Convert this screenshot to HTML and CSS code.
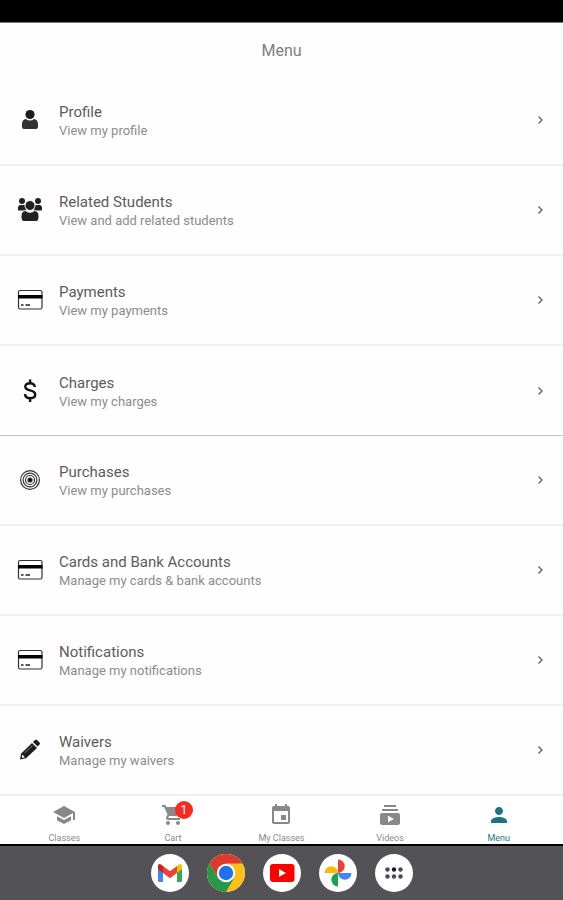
FILE: index.html
```html
<!DOCTYPE html>
<html lang="en">
<head>
  <meta charset="UTF-8" />
  <meta name="viewport" content="width=device-width, initial-scale=1.0" />
  <title>Menu</title>
  <link rel="stylesheet" href="styles.css">
</head>
<body>
  <!-- Shared icons -->
  <svg class="sprite" aria-hidden="true">
    <symbol id="icon-card" viewBox="0 0 26 26">
      <rect x="1.5" y="3.5" width="23.5" height="18.5" rx="1.5" fill="none" stroke="#333" stroke-width="1.2" />
      <path d="M1 8h24.5v3.5H1z" fill="#000" />
      <path d="M4 18h2.5M8.5 18h4.5" stroke="#222" stroke-width="1.5" />
    </symbol>
    <symbol id="icon-chevron" viewBox="0 0 10 10">
      <path d="M3.5 1.5L7 5L3.5 8.5" fill="none" stroke="#666" stroke-width="1.4" />
    </symbol>
  </svg>

  <div class="status-bar"></div>

  <header class="header">
    <h1>Menu</h1>
  </header>

  <main class="menu">
    <a class="menu-item" href="#profile">
      <svg class="menu-icon" viewBox="0 0 26 26">
        <path d="M5 20v-3c0-3 1.5-4.5 4-5a6 6 0 0 0 8 0c2.5 .5 4 2 4 5v3q0 2-2 2H7q-2 0-2-2z" fill="#333" />
        <circle cx="13" cy="7.5" r="4.6" fill="#1c1c1c" />
      </svg>
      <span class="menu-text">
        <span class="menu-title">Profile</span>
        <span class="menu-subtitle">View my profile</span>
      </span>
      <svg class="chevron"><use href="#icon-chevron" /></svg>
    </a>
    <a class="menu-item" href="#students">
      <svg class="menu-icon" viewBox="0 0 26 26" fill="#222">
        <circle cx="5" cy="4" r="3" />
        <circle cx="21" cy="4" r="3" />
        <path d="M1 13V11c0-2 1-3 2.5-3h3.5c1 0 1.5 .5 1.5 1.5 0 2 .5 3 1 4H3q-2 0-2-.5z" />
        <path d="M25 13V11c0-2-1-3-2.5-3h-3.5c-1 0-1.5 .5-1.5 1.5 0 2-.5 3-1 4H23q2 0 2-.5z" />
        <circle cx="13" cy="8.5" r="5" stroke="#fff" />
        <path d="M4 21v-2c0-3.5 1.5-5 4.5-5.5a6.5 6.5 0 0 0 9 0c3 .5 4.5 2 4.5 5.5v2q0 3.5-3 3.5H7q-3 0-3-3.5z" stroke="#fff" />
      </svg>
      <span class="menu-text">
        <span class="menu-title">Related Students</span>
        <span class="menu-subtitle">View and add related students</span>
      </span>
      <svg class="chevron"><use href="#icon-chevron" /></svg>
    </a>
    <a class="menu-item" href="#payments">
      <svg class="menu-icon"><use href="#icon-card" /></svg>
      <span class="menu-text">
        <span class="menu-title">Payments</span>
        <span class="menu-subtitle">View my payments</span>
      </span>
      <svg class="chevron"><use href="#icon-chevron" /></svg>
    </a>
    <a class="menu-item menu-item-dark" href="#charges">
      <svg class="menu-icon" viewBox="0 0 26 26">
        <path d="M18 9c-.5-2.5-2.3-3.8-4.9-3.8-2.8 0-4.8 1.3-4.8 3.5 0 2.5 2.2 3 4.9 3.7 3 .8 5 1.6 5 4.1 0 2.3-2 3.7-4.9 3.7-3 0-5-1.4-5.4-4.2M13.1 1.5v4M13.1 20v4" fill="none" stroke="#111" stroke-width="2.4" />
      </svg>
      <span class="menu-text">
        <span class="menu-title">Charges</span>
        <span class="menu-subtitle">View my charges</span>
      </span>
      <svg class="chevron"><use href="#icon-chevron" /></svg>
    </a>
    <a class="menu-item" href="#purchases">
      <svg class="menu-icon" viewBox="0 0 26 26" fill="none" stroke="#333" stroke-width="1.2">
        <circle cx="13" cy="13" r="9.4" />
        <circle cx="13" cy="13" r="6.9" />
        <circle cx="13" cy="13" r="4.5" />
        <circle cx="13" cy="13" r="2" fill="#000" />
      </svg>
      <span class="menu-text">
        <span class="menu-title">Purchases</span>
        <span class="menu-subtitle">View my purchases</span>
      </span>
      <svg class="chevron"><use href="#icon-chevron" /></svg>
    </a>
    <a class="menu-item" href="#cards">
      <svg class="menu-icon"><use href="#icon-card" /></svg>
      <span class="menu-text">
        <span class="menu-title">Cards and Bank Accounts</span>
        <span class="menu-subtitle">Manage my cards &amp; bank accounts</span>
      </span>
      <svg class="chevron"><use href="#icon-chevron" /></svg>
    </a>
    <a class="menu-item" href="#notifications">
      <svg class="menu-icon"><use href="#icon-card" /></svg>
      <span class="menu-text">
        <span class="menu-title">Notifications</span>
        <span class="menu-subtitle">Manage my notifications</span>
      </span>
      <svg class="chevron"><use href="#icon-chevron" /></svg>
    </a>
    <a class="menu-item" href="#waivers">
      <svg class="menu-icon" viewBox="0 0 26 26">
        <path d="M3 22.5l1.2-6L15 6l5 5L9 21.3z" fill="#1c1c1c" />
        <path d="M16 5l2-2q1-1 2 0l2.5 2.5q1 1 0 2l-2 2z" fill="#1c1c1c" />
        <path d="M5.2 17.5l2.7 2.8-3 .7z" fill="#fff" />
        <path d="M7.5 16l8-7.5" stroke="#999" stroke-width=".8" />
      </svg>
      <span class="menu-text">
        <span class="menu-title">Waivers</span>
        <span class="menu-subtitle">Manage my waivers</span>
      </span>
      <svg class="chevron"><use href="#icon-chevron" /></svg>
    </a>
  </main>

  <nav class="tabs">
    <a class="tab" href="#classes">
      <svg class="tab-icon" viewBox="0 0 24 24"><path d="M5 13.18v4L12 21l7-3.82v-4L12 17l-7-3.82zM12 3L1 9l11 6 9-4.91V17h2V9L12 3z" /></svg>
      <span>Classes</span>
    </a>
    <a class="tab" href="#cart">
      <span class="cart">
        <svg class="tab-icon" viewBox="0 0 24 24"><path d="M7 18c-1.1 0-1.99.9-1.99 2S5.9 22 7 22s2-.9 2-2-.9-2-2-2zM1 2v2h2l3.6 7.59-1.35 2.45c-.16.28-.25.61-.25.96 0 1.1.9 2 2 2h12v-2H7.42c-.14 0-.25-.11-.25-.25l.03-.12.9-1.63h7.45c.75 0 1.41-.41 1.75-1.03l3.58-6.49A1 1 0 0 0 20 4H5.21l-.94-2H1zm16 16c-1.1 0-1.99.9-1.99 2s.89 2 1.99 2 2-.9 2-2-.9-2-2-2z" /></svg>
        <span class="badge">1</span>
      </span>
      <span>Cart</span>
    </a>
    <a class="tab" href="#my-classes">
      <svg class="tab-icon" viewBox="0 0 24 24"><path d="M17 12h-5v5h5v-5zM16 1v2H8V1H6v2H5c-1.11 0-1.99.9-1.99 2L3 19c0 1.1.89 2 2 2h14c1.1 0 2-.9 2-2V5c0-1.1-.9-2-2-2h-1V1h-2zm3 18H5V8h14v11z" /></svg>
      <span>My Classes</span>
    </a>
    <a class="tab" href="#videos">
      <svg class="tab-icon" viewBox="0 0 24 24"><path d="M20 8H4V6h16v2zm-2-6H6v2h12V2zm4 10v8c0 1.1-.9 2-2 2H4c-1.1 0-2-.9-2-2v-8c0-1.1.9-2 2-2h16c1.1 0 2 .9 2 2zm-6 4l-6-3.27v6.53L16 16z" /></svg>
      <span>Videos</span>
    </a>
    <a class="tab tab-active" href="#menu">
      <svg class="tab-icon" viewBox="0 0 24 24"><path d="M12 12c2.21 0 4-1.79 4-4s-1.79-4-4-4-4 1.79-4 4 1.79 4 4 4zm0 2c-2.67 0-8 1.34-8 4v2h16v-2c0-2.66-5.33-4-8-4z" /></svg>
      <span>Menu</span>
    </a>
  </nav>

  <!-- System dock -->
  <footer class="dock">
    <button class="app" aria-label="Gmail">
      <svg viewBox="0 0 38 38">
        <path d="M7 13.5L12 17v11H8.5Q7 28 7 26.5z" fill="#4285f4" />
        <path d="M31 13.5L26 17v11h3.5q1.5 0 1.5-1.5z" fill="#34a853" />
        <path d="M26 12l2-1.5q3-1.5 3 2v2.5L26 19z" fill="#fbbc04" />
        <path d="M12 12l-2-1.5q-3-1.5-3 2v2.5L12 19z" fill="#c5221f" />
        <path d="M12 12l7 5.3 7-5.3v7l-7 5.2-7-5.2z" fill="#ea4335" />
      </svg>
    </button>
    <button class="app" aria-label="Chrome">
      <svg viewBox="0 0 38 38">
        <circle cx="19" cy="19" r="19" fill="#fbc116" />
        <path d="M19 9.5H35.45A19 19 0 0 0 2.55 9.5L10.77 23.75 19 19z" fill="#db3a2d" />
        <path d="M2.55 9.5A19 19 0 0 0 19 38L27.23 23.75 19 19 10.77 23.75z" fill="#279847" />
        <circle cx="19" cy="19" r="9.2" fill="#fff" />
        <circle cx="19" cy="19" r="7.2" fill="#1a73e8" />
      </svg>
    </button>
    <button class="app" aria-label="YouTube">
      <svg viewBox="0 0 38 38">
        <rect x="7" y="10" width="24.5" height="18" rx="3" fill="#f00" />
        <path d="M16 15v8l7-4z" fill="#fff" />
      </svg>
    </button>
    <button class="app" aria-label="Photos">
      <svg viewBox="0 0 38 38">
        <path d="M19 5.5a6.7 6.7 0 0 1 0 13.4z" fill="#ea4335" />
        <path d="M32.5 19a6.7 6.7 0 0 1-13.4 0z" fill="#4285f4" />
        <path d="M19 32.5a6.7 6.7 0 0 1 0-13.4z" fill="#18a34a" />
        <path d="M5.5 19a6.7 6.7 0 0 1 13.4 0z" fill="#fbb904" />
      </svg>
    </button>
    <button class="app" aria-label="All apps">
      <svg viewBox="0 0 38 38" fill="#4a485c">
        <circle cx="12.5" cy="15.5" r="2.2" />
        <circle cx="19" cy="15.5" r="2.2" fill="#1b1836" />
        <circle cx="25.5" cy="15.5" r="2.2" />
        <circle cx="12.5" cy="22.5" r="2.2" />
        <circle cx="19" cy="22.5" r="2.2" />
        <circle cx="25.5" cy="22.5" r="2.2" />
      </svg>
    </button>
  </footer>
</body>
</html>
```
FILE: styles.css
```css
* {
  box-sizing: border-box;
}
body {
  margin: 0;
  min-height: 100vh;
  display: flex;
  flex-direction: column;
  font-family: Roboto, sans-serif;
  background-color: #fefefe;
}
.sprite {
  display: none;
}
.status-bar {
  height: 23px;
  background-color: #000;
  border-bottom: 1px solid #777;
}
.header {
  height: 53px;
  padding-top: 2px;
  display: flex;
  align-items: center;
  justify-content: center;
}
h1 {
  margin: 0;
  font-size: 16px;
  font-weight: 400;
  color: #808080;
}
.menu {
  flex: 1;
}
.menu-item {
  display: flex;
  align-items: center;
  height: 90px;
  padding: 0 18px 0 17px;
  border-bottom: 2px solid #f0f0f0;
  text-decoration: none;
}
.menu-item-dark {
  border-bottom: 1px solid #c4c4c4;
}
.menu-icon {
  width: 26px;
  height: 26px;
}
.menu-text {
  flex: 1;
  display: flex;
  flex-direction: column;
  margin-left: 16px;
  padding-top: 2px;
}
.menu-title {
  font-size: 15px;
  line-height: 20px;
  color: #5c5c5c;
}
.menu-subtitle {
  font-size: 13px;
  line-height: 18px;
  color: #8c8c8c;
}
.chevron {
  width: 10px;
  height: 10px;
}
.tabs {
  display: flex;
  height: 48px;
  padding: 0 10px;
  background-color: #fff;
}
.tab {
  flex: 1;
  display: flex;
  flex-direction: column;
  align-items: center;
  padding-top: 7px;
  font-size: 9px;
  line-height: 12px;
  color: #888;
  text-decoration: none;
}
.tab-icon {
  display: block;
  width: 24px;
  height: 24px;
  margin-bottom: 5px;
  fill: currentColor;
}
.tab-active {
  color: #1c7485;
}
.cart {
  position: relative;
}
.badge {
  position: absolute;
  top: -2px;
  left: 14px;
  width: 18px;
  height: 18px;
  border-radius: 50%;
  background-color: #f92a20;
  color: #fff;
  font-size: 13px;
  line-height: 18px;
  text-align: center;
}
.dock {
  display: flex;
  align-items: center;
  justify-content: center;
  gap: 18px;
  height: 56px;
  border-top: 2px solid #000;
  background-color: #535256;
}
.app {
  width: 38px;
  height: 38px;
  padding: 0;
  border: none;
  border-radius: 50%;
  background-color: #fff;
  cursor: pointer;
}
.app svg {
  display: block;
}
```
